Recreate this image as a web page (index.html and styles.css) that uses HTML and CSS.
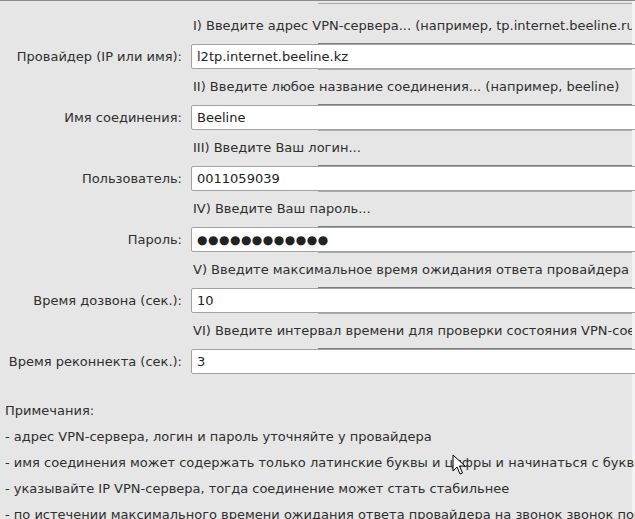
FILE: index.html
```html
<!DOCTYPE html>
<html>
<head>
<meta charset="utf-8">
<link rel="stylesheet" href="styles.css">
</head>
<body>
<div class="topline"></div>
<div class="form">
  <div></div><div class="hint first">I) Введите адрес VPN-сервера... (например, tp.internet.beeline.ru)</div>
  <div class="label">Провайдер (IP или имя):</div><div class="field"><input type="text" value="l2tp.internet.beeline.kz"></div>
  <div></div><div class="hint">II) Введите любое название соединения... (например, beeline)</div>
  <div class="label">Имя соединения:</div><div class="field"><input type="text" value="Beeline"></div>
  <div></div><div class="hint">III) Введите Ваш логин...</div>
  <div class="label">Пользователь:</div><div class="field"><input type="text" value="0011059039"></div>
  <div></div><div class="hint">IV) Введите Ваш пароль...</div>
  <div class="label">Пароль:</div><div class="field"><input type="text" class="dots" value="●●●●●●●●●●●●"></div>
  <div></div><div class="hint">V) Введите максимальное время ожидания ответа провайдера (сек.)</div>
  <div class="label">Время дозвона (сек.):</div><div class="field"><input type="text" value="10"></div>
  <div></div><div class="hint">VI) Введите интервал времени для проверки состояния VPN-соединения (сек.)</div>
  <div class="label">Время реконнекта (сек.):</div><div class="field"><input type="text" value="3"></div>
</div>
<div class="notes">
  <p>Примечания:</p>
  <p>- адрес VPN-сервера, логин и пароль уточняйте у провайдера</p>
  <p>- имя соединения может содержать только латинские буквы и цифры и начинаться с буквы</p>
  <p>- указывайте IP VPN-сервера, тогда соединение может стать стабильнее</p>
  <p>- по истечении максимального времени ожидания ответа провайдера на звонок звонок повторяется</p>
</div>
<svg class="cursor" width="14" height="22" viewBox="0 0 14 22">
  <path d="M1 1 L1 17 L5 13 L8 20 L10.5 19 L7.5 12 L13 12 Z" fill="#fff" stroke="#000" stroke-width="1"/>
</svg>
</body>
</html>
```
FILE: styles.css
```css
body {
    margin: 0;
    width: 635px;
    height: 519px;
    overflow: hidden;
    position: relative;
    background: linear-gradient(to right, #e6e6e6 632px, #f3f3f3 632px);
    font-family: "DejaVu Sans", sans-serif;
    font-size: 13px;
    color: #2f2f2f;
}
.topline {
    height: 1px;
    background-color: #8a8a8a;
    margin-bottom: 2px;
}
.form {
    display: grid;
    grid-template-columns: 182px 441px;
    column-gap: 9px;
}
.label {
    text-align: right;
    height: 25px;
    line-height: 25px;
}
.hint {
    height: 36px;
    box-sizing: border-box;
    padding-left: 2px;
    line-height: 36px;
    white-space: nowrap;
    overflow: hidden;
    background-color: #e6e6e6;
    /* frame lines only show on the right part */
    background-image:
        linear-gradient(#ababab, #ababab),
        linear-gradient(#7c7c7c, #7c7c7c);
    background-repeat: no-repeat;
    background-size: 314px 1px, 314px 1px;
    background-position: 127px 0, 127px 100%;
}
.hint.first {
    height: 41px;
    padding-top: 5px;
    line-height: 36px;
}
.field {
    height: 25px;
}
.field input {
    box-sizing: border-box;
    width: 470px;
    height: 25px;
    margin: 0;
    border: 1px solid #a2a2a2;
    border-radius: 2px;
    padding: 0 5px;
    background-color: white;
    font-family: "DejaVu Sans", sans-serif;
    font-size: 13px;
    color: #222;
    outline: none;
}
.field input.dots {
    font-size: 12px;
    letter-spacing: 0.5px;
}
.notes {
    padding: 24px 0 0 5px;
}
.notes p {
    margin: 0;
    height: 26px;
    line-height: 26px;
    white-space: nowrap;
}
.cursor {
    position: absolute;
    left: 452px;
    top: 454px;
}
```
